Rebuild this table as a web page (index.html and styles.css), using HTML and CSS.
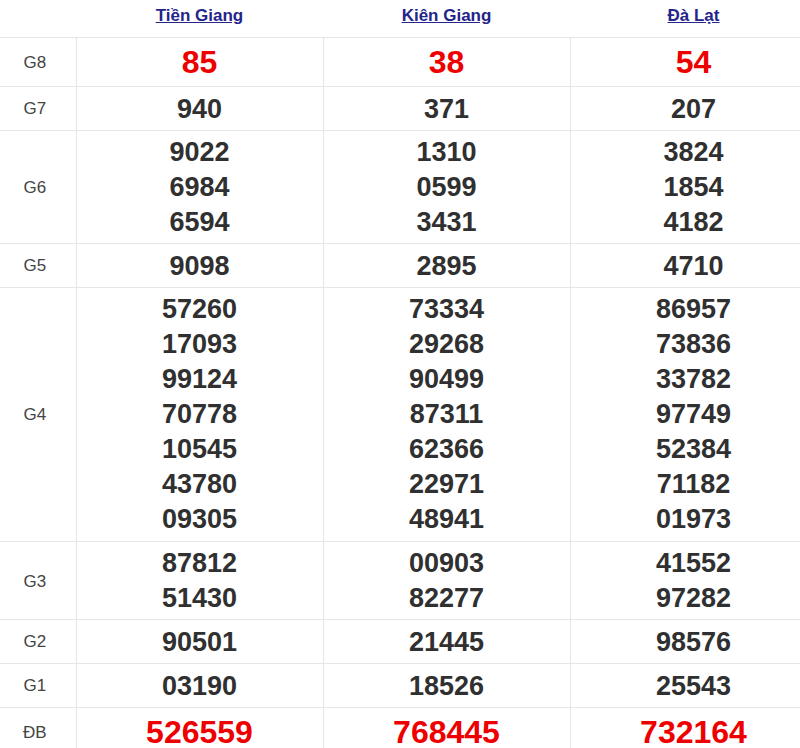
FILE: index.html
```html
<!DOCTYPE html>
<html lang="vi">
<head>
<meta charset="utf-8">
<title>Kết quả xổ số</title>
<link rel="stylesheet" href="styles.css">
</head>
<body>
<div class="wrap">
<table class="kq">
  <colgroup>
    <col class="c-lbl"><col class="c-num"><col class="c-num"><col class="c-num">
  </colgroup>
  <thead>
    <tr>
      <th></th>
      <th><a href="#">Tiền Giang</a></th>
      <th><a href="#">Kiên Giang</a></th>
      <th><a href="#">Đà Lạt</a></th>
    </tr>
  </thead>
  <tbody>
    <tr class="big">
      <td class="lbl">G8</td>
      <td class="red">85</td><td class="red">38</td><td class="red">54</td>
    </tr>
    <tr class="single">
      <td class="lbl">G7</td>
      <td>940</td><td>371</td><td>207</td>
    </tr>
    <tr>
      <td class="lbl">G6</td>
      <td><div>9022</div><div>6984</div><div>6594</div></td>
      <td><div>1310</div><div>0599</div><div>3431</div></td>
      <td><div>3824</div><div>1854</div><div>4182</div></td>
    </tr>
    <tr class="single">
      <td class="lbl">G5</td>
      <td>9098</td><td>2895</td><td>4710</td>
    </tr>
    <tr class="seven">
      <td class="lbl">G4</td>
      <td><div>57260</div><div>17093</div><div>99124</div><div>70778</div><div>10545</div><div>43780</div><div>09305</div></td>
      <td><div>73334</div><div>29268</div><div>90499</div><div>87311</div><div>62366</div><div>22971</div><div>48941</div></td>
      <td><div>86957</div><div>73836</div><div>33782</div><div>97749</div><div>52384</div><div>71182</div><div>01973</div></td>
    </tr>
    <tr>
      <td class="lbl">G3</td>
      <td><div>87812</div><div>51430</div></td>
      <td><div>00903</div><div>82277</div></td>
      <td><div>41552</div><div>97282</div></td>
    </tr>
    <tr class="single">
      <td class="lbl">G2</td>
      <td>90501</td><td>21445</td><td>98576</td>
    </tr>
    <tr class="single">
      <td class="lbl">G1</td>
      <td>03190</td><td>18526</td><td>25543</td>
    </tr>
    <tr class="big">
      <td class="lbl">ĐB</td>
      <td class="red">526559</td><td class="red">768445</td><td class="red">732164</td>
    </tr>
  </tbody>
</table>
</div>
</body>
</html>
```
FILE: styles.css
```css
html, body {
  margin: 0;
  padding: 0;
  background: #fff;
  overflow: hidden;
}
.wrap {
  width: 800px;
  overflow: hidden;
}
.kq {
  border-collapse: collapse;
  table-layout: fixed;
  width: 816px;
  font-family: "Liberation Sans", Arial, sans-serif;
  color: #333;
}
.c-lbl { width: 76px; }
.c-num { width: 247px; }
.kq th {
  padding: 6px 0 11px;
  line-height: 20px;
  font-size: 17px;
  font-weight: bold;
  text-align: center;
  border: none;
}
.kq th a {
  color: #24248a;
  text-decoration: underline;
}
.kq td {
  border: 1px solid #e6e6e6;
  padding: 4px 0 3px;
  text-align: center;
  vertical-align: middle;
  font-size: 27px;
  font-weight: bold;
  line-height: 35px;
  color: #303030;
}
.kq td:first-child { border-left: none; }
.kq tr.single td { line-height: 36px; }
.kq tr.seven td { padding-bottom: 4px; }
.kq tr.big td { line-height: 41px; }
.kq td.lbl {
  font-size: 17px;
  font-weight: normal;
  color: #444;
  padding-right: 6px;
}
.kq td.red {
  font-size: 32px;
  color: #e00;
}
```
